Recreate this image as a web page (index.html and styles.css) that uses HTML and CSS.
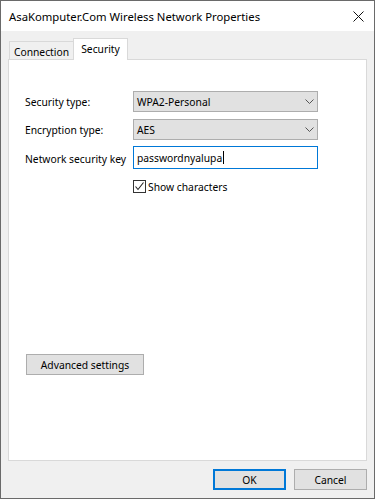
FILE: index.html
```html
<!DOCTYPE html>
<html>
<head>
<meta charset="utf-8">
<link rel="stylesheet" href="styles.css">
</head>
<body>
<div class="window">
  <div class="titlebar">
    <span class="title">AsaKomputer.Com Wireless Network Properties</span>
    <svg class="close" width="11" height="11" viewBox="0 0 11 11"><path d="M0.5 0.5 L10.5 10.5 M10.5 0.5 L0.5 10.5" stroke="#111" stroke-width="1" fill="none"/></svg>
  </div>
  <div class="body">
    <div class="tabs">
      <div class="tab">Connection</div>
      <div class="tab active">Security</div>
    </div>
    <div class="panel">
      <div class="form">
        <div class="label">Security type:</div>
        <div class="select">WPA2-Personal<svg class="chev" width="9" height="5" viewBox="0 0 9 5"><path d="M0.5 0.5 L4.5 4.5 L8.5 0.5" stroke="#555" stroke-width="1" fill="none"/></svg></div>
        <div class="label">Encryption type:</div>
        <div class="select">AES<svg class="chev" width="9" height="5" viewBox="0 0 9 5"><path d="M0.5 0.5 L4.5 4.5 L8.5 0.5" stroke="#555" stroke-width="1" fill="none"/></svg></div>
        <div class="label">Network security key</div>
        <div class="input">passwordnyalupa<span class="caret"></span></div>
      </div>
      <div class="check-row">
        <span class="checkbox"><svg width="11" height="11" viewBox="0 0 11 11"><path d="M1.5 5.5 L4 8.5 L9.5 1.5" stroke="#222" stroke-width="1.1" fill="none"/></svg></span>
        <span class="check-label">Show characters</span>
      </div>
      <div class="btn adv">Advanced settings</div>
    </div>
    <div class="footer">
      <div class="btn ok">OK</div>
      <div class="btn cancel">Cancel</div>
    </div>
  </div>
</div>
</body>
</html>
```

FILE: styles.css
```css
html, body {
  margin: 0;
  padding: 0;
  background: #fff;
}
body {
  font-family: "Noto Sans", "Open Sans", sans-serif;
  font-size: 10.3px;
  color: #000;
}
.window {
  width: 375px;
  height: 499px;
  box-sizing: border-box;
  border: 1px solid #6a6a6a;
  display: flex;
  flex-direction: column;
}
.titlebar {
  height: 30px;
  background: #fff;
  display: flex;
  align-items: center;
  padding-left: 8px;
  padding-right: 10px;
}
.title {
  flex: 1;
  font-size: 11.3px;
  color: #000;
}
.close {
  display: block;
}
.body {
  flex: 1;
  background: #f0f0f0;
  padding: 7px 7px 0 7px;
  display: flex;
  flex-direction: column;
}
.tabs {
  display: flex;
  align-items: flex-end;
  height: 21px;
  padding-left: 1px;
  position: relative;
  z-index: 1;
}
.tab {
  box-sizing: border-box;
  height: 18px;
  border: 1px solid #d9d9d9;
  border-bottom: none;
  background: #f0f0f0;
  display: flex;
  align-items: center;
  justify-content: center;
  width: 65px;
  padding-top: 2px;
}
.tab.active {
  height: 22px;
  margin-bottom: -1px;
  margin-left: -1px;
  width: 55px;
  background: #fff;
  padding-top: 0;
  padding-bottom: 2px;
}
.panel {
  flex: 1;
  background: #fff;
  border: 1px solid #d9d9d9;
  padding: 31px 0 0 16px;
  display: flex;
  flex-direction: column;
}
.form {
  display: grid;
  grid-template-columns: 108px 185px;
  grid-template-rows: 21px 21px 23px;
  row-gap: 7px;
}
.form .input {
  margin-top: -1px;
  height: 23px;
  align-self: start;
}
.label {
  display: flex;
  align-items: center;
}
.select {
  box-sizing: border-box;
  border: 1px solid #adadad;
  background: #e1e1e1;
  display: flex;
  align-items: center;
  justify-content: space-between;
  padding: 0 3px 0 3px;
}
.chev {
  display: block;
}
.input {
  box-sizing: border-box;
  border: 1px solid #0078d7;
  background: #fff;
  display: flex;
  align-items: center;
  padding-left: 3px;
}
.caret {
  display: inline-block;
  width: 1px;
  height: 13px;
  background: #000;
  margin-left: 1px;
}
.check-row {
  display: flex;
  align-items: center;
  height: 13px;
  margin-top: 10px;
  margin-left: 108px;
}
.checkbox {
  box-sizing: border-box;
  width: 13px;
  height: 13px;
  border: 1px solid #333;
  background: #fff;
  display: flex;
  align-items: center;
  justify-content: center;
}
.checkbox svg {
  display: block;
}
.check-label {
  margin-left: 2px;
}
.btn {
  box-sizing: border-box;
  height: 21px;
  border: 1px solid #adadad;
  background: #e1e1e1;
  display: flex;
  align-items: center;
  justify-content: center;
}
.adv {
  width: 118px;
  margin-top: 161px;
  margin-left: 1px;
}
.footer {
  height: 37px;
  box-sizing: border-box;
  padding-top: 8px;
  display: flex;
  justify-content: flex-end;
  gap: 8px;
}
.ok {
  width: 73px;
  border: 2px solid #0078d7;
}
.cancel {
  width: 73px;
}
```
